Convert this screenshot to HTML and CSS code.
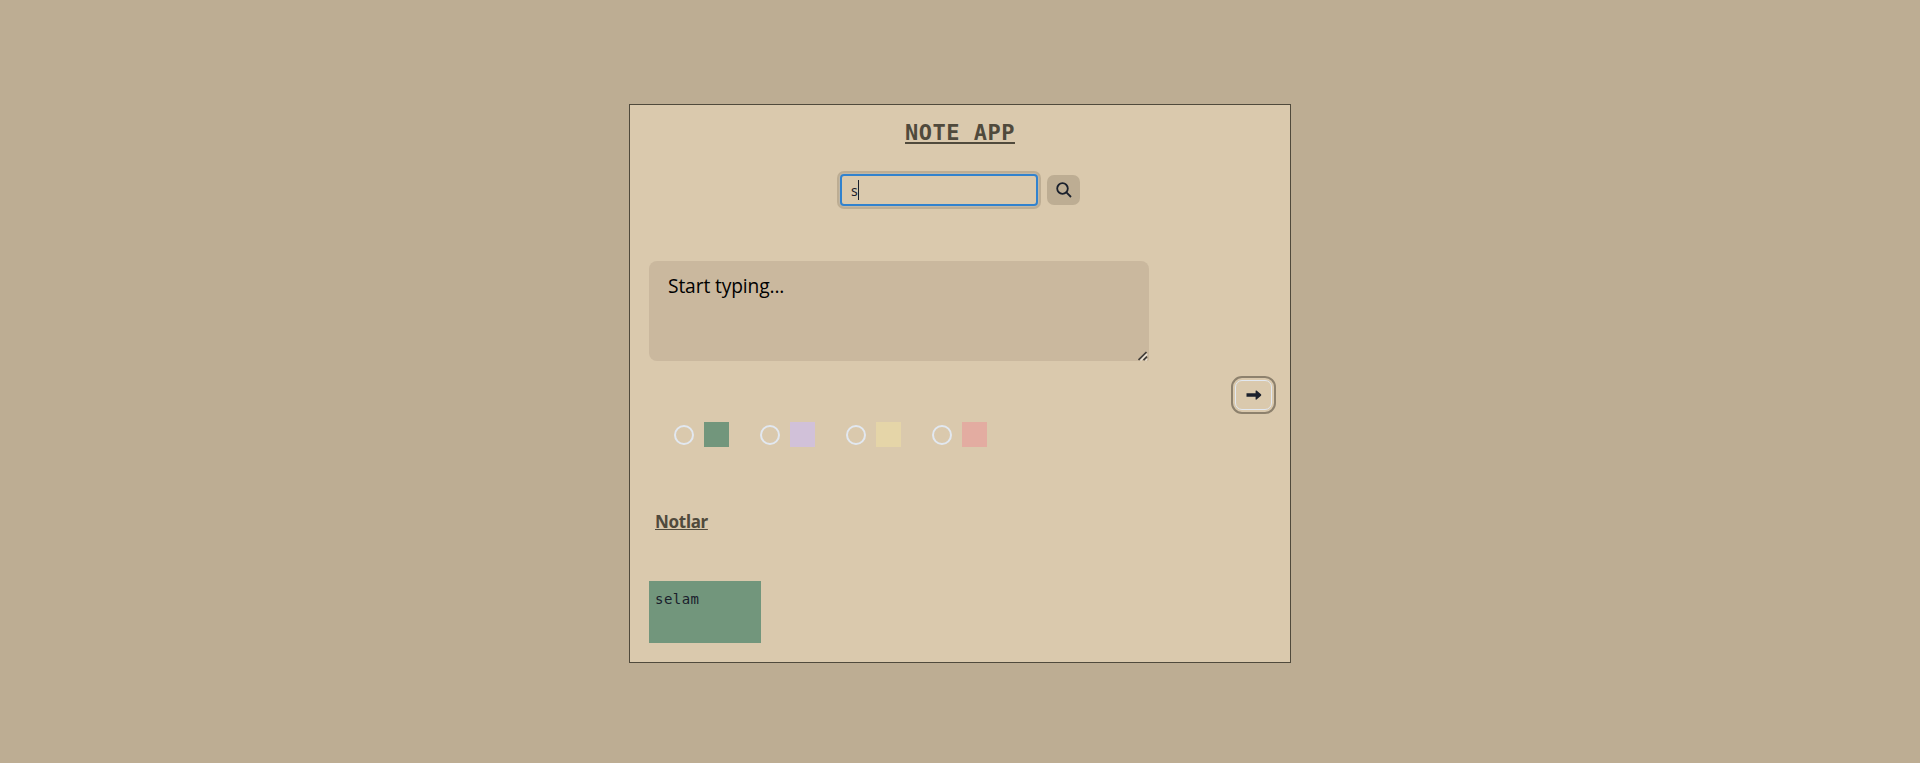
FILE: index.html
```html
<!DOCTYPE html>
<html lang="tr">
<head>
<meta charset="utf-8">
<title>Note App</title>
<link rel="stylesheet" href="styles.css">
</head>
<body>
<main class="card">
  <h1 class="title">NOTE APP</h1>
  <div class="search">
    <div class="search-field"><span class="typed">s</span><span class="caret"></span></div>
    <button class="search-btn" aria-label="Search">
      <svg width="16" height="16" viewBox="0 0 16 16" fill="none" stroke="#1a202c"><circle cx="6.5" cy="6.5" r="5.3" stroke-width="1.8"/><path d="M10.4 10.4L15 15" stroke-width="1.8"/></svg>
    </button>
  </div>
  <div class="editor">
    <span class="hint">Start typing...</span>
    <svg class="grip" width="10" height="10" viewBox="0 0 10 10" fill="none"><path d="M2.5 9.5L9 3M7.5 9.5L9 8" stroke="#eee6da" stroke-width="1.6"/><path d="M0.5 9L8.5 1M5.5 9.2L9 5.7" stroke="#403c38" stroke-width="1.7"/></svg>
  </div>
  <div class="send-row">
    <button class="send-btn" aria-label="Add">
      <svg width="16" height="10" viewBox="0 0 16 10" fill="#1a202c"><path d="M0.5 3.2H9.6V1Q9.6 0 10.5 0.6L15 4.3Q15.6 5 15 5.7L10.5 9.4Q9.6 10 9.6 9V6.8H0.5Z"/></svg>
    </button>
  </div>
  <div class="colors">
    <label class="option"><span class="radio"></span><span class="swatch green"></span></label>
    <label class="option"><span class="radio"></span><span class="swatch purple"></span></label>
    <label class="option"><span class="radio"></span><span class="swatch yellow"></span></label>
    <label class="option"><span class="radio"></span><span class="swatch pink"></span></label>
  </div>
  <h2 class="subtitle">Notlar</h2>
  <div class="note green">selam</div>
</main>
</body>
</html>
```

FILE: styles.css
```css
* { box-sizing: border-box; }
body {
  margin: 0;
  height: 763px;
  padding-top: 104px;
  background: #bdad93;
  color: #1a202c;
  font-family: "Noto Sans", sans-serif;
  overflow: hidden;
}
.card {
  width: 662px;
  height: 559px;
  margin: 0 auto;
  padding: 0 19px;
  border: 1px solid #504a3c;
  background: #dac9ad;
  display: flex;
  flex-direction: column;
  align-items: flex-start;
}
.title {
  align-self: center;
  margin: 10px 0 0;
  font: bold 22px/36px "DejaVu Sans Mono", monospace;
  letter-spacing: 0.5px;
  color: #504a3c;
  text-decoration: underline;
  text-decoration-thickness: 2px;
  text-underline-offset: 2px;
}
.search {
  align-self: center;
  display: flex;
  align-items: center;
  gap: 9px;
  height: 32px;
  margin-top: 23px;
}
.search-field {
  width: 198px;
  height: 32px;
  padding-left: 9px;
  border: 2px solid #3182ce;
  border-radius: 4px;
  box-shadow: 0 0 0 1px #c0b8a8, 0 0 0 3px #bdad93;
  display: flex;
  align-items: center;
}
.typed {
  margin-top: 2px;
  font-size: 14px;
  line-height: 20px;
}
.caret {
  width: 1px;
  height: 20px;
  background: #1a202c;
}
button {
  border: 0;
  padding: 0;
  background: none;
  display: flex;
  align-items: center;
  justify-content: center;
}
.search-btn {
  width: 33px;
  height: 30px;
  border-radius: 7px;
  background: #bdad93;
}
.search-btn svg { margin-top: -1px; }
.editor {
  position: relative;
  width: 500px;
  height: 100px;
  margin-top: 55px;
  padding: 10px 20px;
  border-radius: 8px 8px 2px 8px;
  background: #cab89e;
}
.hint {
  display: block;
  margin-left: -1px;
  font: 19.2px/30px "Open Sans", sans-serif;
  letter-spacing: -0.12px;
  color: #000;
}
.grip {
  position: absolute;
  right: 1px;
  bottom: 0;
}
.send-row {
  align-self: stretch;
  display: flex;
  justify-content: flex-end;
  margin: 19px -1px 0 0;
}
.send-btn {
  width: 37px;
  height: 30px;
  border: 1px solid #e2e8f0;
  border-radius: 7px;
  outline: 2px solid #8d816d;
  outline-offset: 2px;
}
.send-btn svg { margin-top: -1px; }
.colors {
  display: flex;
  gap: 31px;
  margin: 12px 0 0 25px;
}
.option {
  display: flex;
  align-items: center;
  gap: 10px;
}
.radio {
  width: 20px;
  height: 20px;
  margin-top: 1px;
  border: 2px solid #e2e8f0;
  border-radius: 50%;
}
.swatch {
  width: 25px;
  height: 25px;
}
.green { background: #72967c; }
.purple { background: #d1c1d9; }
.yellow { background: #e5d5a8; }
.pink { background: #e3aca1; }
.subtitle {
  margin: 61px 0 0 6px;
  font: bold 17px/27px "Noto Sans", sans-serif;
  letter-spacing: -0.3px;
  color: #504a3c;
  text-decoration: underline;
  text-decoration-thickness: 1px;
  text-underline-offset: 1px;
}
.note {
  width: 112px;
  height: 62px;
  margin-top: 46px;
  padding: 8px 6px;
  font: 14px/21px "DejaVu Sans Mono", monospace;
  letter-spacing: 0.45px;
}
```
